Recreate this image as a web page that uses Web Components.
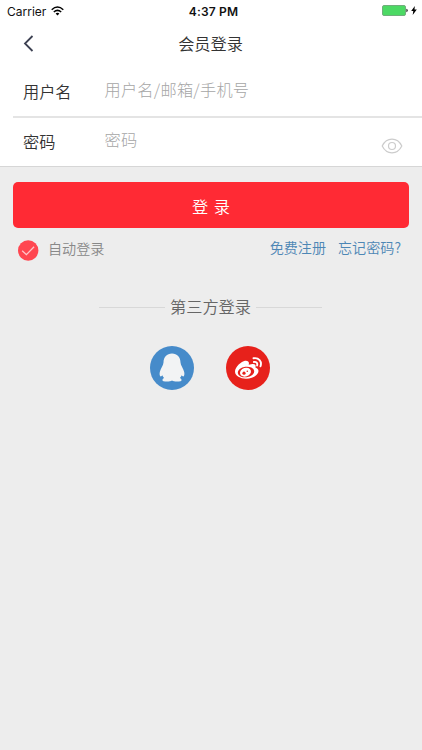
<!DOCTYPE html>
<html lang="zh-CN">
<head>
<meta charset="UTF-8">
<meta name="viewport" content="width=device-width, initial-scale=1">
<title>会员登录</title>
<style>
  body {
    margin: 0;
    background: #ededed;
    font-family: "Noto Sans CJK SC", sans-serif;
    font-size: 16.2px;
    font-weight: 350;
    color: #333;
  }
</style>
</head>
<body>
<login-page></login-page>

<script>
  // Small helper so every component gets an open shadow root from its own markup
  class BaseElement extends HTMLElement {
    constructor() {
      super();
      this.attachShadow({ mode: 'open' });
    }

    connectedCallback() {
      this.shadowRoot.innerHTML = this.template();
    }
  }

  // Carrier, time and battery
  class StatusBar extends BaseElement {
    template() {
      return `
        <style>
          :host {
            display: grid;
            grid-template-columns: 1fr auto 1fr;
            align-items: center;
            height: 22px;
            padding: 0 5px 0 7px;
            font-family: Inter, sans-serif;
            font-size: 12px;
            font-weight: 400;
            color: #111;
          }
          .left, .right { display: flex; align-items: center; }
          .left { gap: 5px; }
          .left svg { margin-bottom: 1px; }
          .right { justify-content: flex-end; gap: 3px; margin-bottom: 1px; }
          .time { font-weight: 600; letter-spacing: 0.2px; padding-left: 3px; }
          svg { display: block; }
        </style>
        <div class="left">
          <span>Carrier</span>
          <svg width="13" height="10" viewBox="0 0 13 10" fill="none" stroke="#000" stroke-width="1.5">
            <path d="M.7 3.7Q6.5-1.6 12.3 3.7M2.8 6Q6.5 2.7 10.2 6"/>
            <path d="M4.6 7.4Q6.5 6 8.4 7.4L6.5 9.4Z" fill="#000" stroke="none"/>
          </svg>
        </div>
        <span class="time">4:37 PM</span>
        <div class="right">
          <svg width="26" height="11" viewBox="0 0 26 11">
            <rect x=".5" y=".5" width="23" height="10" rx="1.5" fill="#4cd964" stroke="#70ae7b"/>
            <path d="M24.3 3.8q1.5.3 1.5 1.7t-1.5 1.7z" fill="#333"/>
          </svg>
          <svg width="6" height="9" viewBox="0 0 6 9"><path d="M3.8 0 .2 5h2.1L1.7 9 5.8 3.6H3.5z" fill="#000"/></svg>
        </div>
      `;
    }
  }

  // Back arrow and centred title
  class NavBar extends BaseElement {
    template() {
      return `
        <style>
          :host {
            display: grid;
            grid-template-columns: 35px 1fr 35px;
            align-items: center;
            height: 44px;
          }
          .back { justify-self: end; display: block; margin: 0 1px 1px 0; }
          .title { text-align: center; line-height: 24px; padding: 0 1px 2px 0; }
        </style>
        <svg class="back" width="11" height="17" viewBox="0 0 11 17" fill="none" stroke="#3d4152" stroke-width="1.8">
          <path d="M9.5 1 2 8.5 9.5 16"/>
        </svg>
        <div class="title"><slot></slot></div>
      `;
    }
  }

  // One label/placeholder line; the slot holds an optional trailing icon
  class FormRow extends BaseElement {
    template() {
      return `
        <style>
          :host {
            display: flex;
            box-sizing: border-box;
            height: 50px;
            padding-left: 10px;
            line-height: 24px;
          }
          .label { width: 81.5px; padding-top: 2px; }
          .hint { flex: 1; color: #a6a6a6; font-weight: 300; letter-spacing: 0.25px; }
          ::slotted(*) { margin: 11px 19px 0 0; }
        </style>
        <div class="label">${this.getAttribute('label')}</div>
        <div class="hint">${this.getAttribute('placeholder')}</div>
        <slot></slot>
      `;
    }
  }

  class EyeIcon extends BaseElement {
    template() {
      return `
        <style>
          :host { display: block; width: 22px; height: 16px; }
          svg { display: block; }
        </style>
        <svg width="22" height="16" viewBox="0 0 22 16" fill="none" stroke="#ccc" stroke-width="1.2">
          <path d="M1.2 8C3.5 3.4 7 1.2 11 1.2S18.5 3.4 20.8 8C18.5 12.6 15 14.8 11 14.8S3.5 12.6 1.2 8Z"/>
          <circle cx="11" cy="8" r="3.5"/>
        </svg>
      `;
    }
  }

  class LoginButton extends BaseElement {
    template() {
      return `
        <style>
          :host { display: block; }
          button {
            display: block;
            width: 100%;
            height: 46px;
            padding: 1px 0 0;
            border: 0;
            border-radius: 5px;
            background: #ff2a34;
            color: #fff;
            font: inherit;
            word-spacing: 2px;
          }
        </style>
        <button type="button"><slot></slot></button>
      `;
    }
  }

  // Auto login check and the two links
  class LoginOptions extends BaseElement {
    template() {
      return `
        <style>
          :host {
            display: flex;
            height: 44px;
            padding: 0 7px 0 5px;
            font-size: 14.1px;
            line-height: 20px;
          }
          svg { display: block; margin: 12px 9px 0 0; }
          .auto { flex: 1; padding-top: 10px; color: #888; }
          .links { display: flex; gap: 12px; padding: 9px 1px 0 0; color: #4d87b5; }
        </style>
        <svg width="21" height="21" viewBox="0 0 21 21">
          <circle cx="10.2" cy="10.5" r="10.2" fill="#ff4650"/>
          <path d="M4.2 10.7 8.4 14.7 16.1 6.8" fill="none" stroke="#ffc5c8" stroke-width="1.3"/>
        </svg>
        <span class="auto">自动登录</span>
        <div class="links"><span>免费注册</span><span>忘记密码?</span></div>
      `;
    }
  }

  // Heading with a thin rule on both sides
  class RuledTitle extends BaseElement {
    template() {
      return `
        <style>
          :host {
            display: flex;
            align-items: center;
            justify-content: center;
            gap: 5px;
            height: 24px;
            line-height: 24px;
            padding-right: 1px;
            color: #666;
          }
          i { width: 66px; height: 1px; background: #d8d8d8; }
          span { padding-bottom: 2px; }
        </style>
        <i></i><span><slot></slot></span><i></i>
      `;
    }
  }

  class SocialIcon extends BaseElement {
    template() {
      const icons = {
        qq: `
          <circle cx="22" cy="22" r="22" fill="#468bca"/>
          <path d="M22 7.5C16.800 7.500 13.600 11 13.500 16.600C13.400 19.700 10.600 22.500 9.800 26C9.300 28.300 9.800 30.700 10.800 30.500C11.500 30.300 11.900 29.600 12.300 29.200C12.700 30.400 13.400 31.200 14.100 31.900C12.200 32.600 11.800 34.700 13.500 35.200C16.300 35.900 20.200 35.700 22 34.600C23.800 35.700 27.700 35.900 30.500 35.200C32.200 34.700 31.800 32.600 29.900 31.900C30.600 31.200 31.300 30.400 31.700 29.200C32.100 29.600 32.500 30.300 33.200 30.500C34.200 30.700 34.700 28.300 34.200 26C33.400 22.500 30.600 19.700 30.500 16.600C30.400 11 27.200 7.500 22 7.500Z" fill="#f2f3f4"/>`,
        weibo: `
          <circle cx="22" cy="22" r="22" fill="#e7211b"/>
          <path d="M19 14.7C15.5 15.2 9 20.7 9 25.6C9 30.2 14.5 32.7 20 32.7C27.4 32.7 32.5 28.7 32.5 25.1C32.5 22.9 30.8 21.9 29.4 21.4C30.3 18.4 28.7 16.8 22.7 18.8C23.5 16.2 22.3 14.3 19 14.7Z" fill="#fff"/>
          <ellipse cx="20" cy="26" rx="8.3" ry="5.3" transform="rotate(-7 20 26)" fill="#e7211b"/>
          <ellipse cx="19.5" cy="26.2" rx="5.6" ry="4.3" transform="rotate(-18 19.5 26.2)" fill="#fff"/>
          <circle cx="18" cy="27.2" r="1.6" fill="#e7211b"/>
          <circle cx="21.3" cy="25.2" r=".8" fill="#e7211b"/>
          <path d="M27.5 12.3C32.7 11.3 36.2 15.6 34.5 20.3M27.9 16C30.3 15.5 31.8 17.3 31.1 19.5" fill="none" stroke="#fff" stroke-width="1.9" stroke-linecap="round"/>`
      };
      return `
        <style>
          :host { display: block; width: 44px; height: 44px; }
          svg { display: block; }
        </style>
        <svg width="44" height="44" viewBox="0 0 44 44">${icons[this.getAttribute('name')]}</svg>
      `;
    }
  }

  class LoginPage extends BaseElement {
    template() {
      return `
        <style>
          :host { display: block; height: 750px; background: #ededed; }
          .top { background: #fff; border-bottom: 1px solid #d6d6d6; }
          .form { padding-left: 13px; }
          .form form-row:first-child { height: 52px; padding-top: 11px; border-bottom: 2px solid #e4e4e4; }
          .form form-row:last-child { height: 48px; padding-top: 9px; }
          .body { padding: 15px 13px 0; }
          ruled-title { margin-top: 23px; }
          .social { display: flex; justify-content: center; gap: 32.5px; margin-top: 27px; padding-right: 2px; }
        </style>
        <div class="top">
          <status-bar></status-bar>
          <nav-bar>会员登录</nav-bar>
          <div class="form">
            <form-row label="用户名" placeholder="用户名/邮箱/手机号"></form-row>
            <form-row label="密码" placeholder="密码"><eye-icon></eye-icon></form-row>
          </div>
        </div>
        <div class="body">
          <login-button>登 录</login-button>
          <login-options></login-options>
          <ruled-title>第三方登录</ruled-title>
          <div class="social">
            <social-icon name="qq"></social-icon>
            <social-icon name="weibo"></social-icon>
          </div>
        </div>
      `;
    }
  }

  customElements.define('status-bar', StatusBar);
  customElements.define('nav-bar', NavBar);
  customElements.define('form-row', FormRow);
  customElements.define('eye-icon', EyeIcon);
  customElements.define('login-button', LoginButton);
  customElements.define('login-options', LoginOptions);
  customElements.define('ruled-title', RuledTitle);
  customElements.define('social-icon', SocialIcon);
  customElements.define('login-page', LoginPage);
</script>
</body>
</html>
